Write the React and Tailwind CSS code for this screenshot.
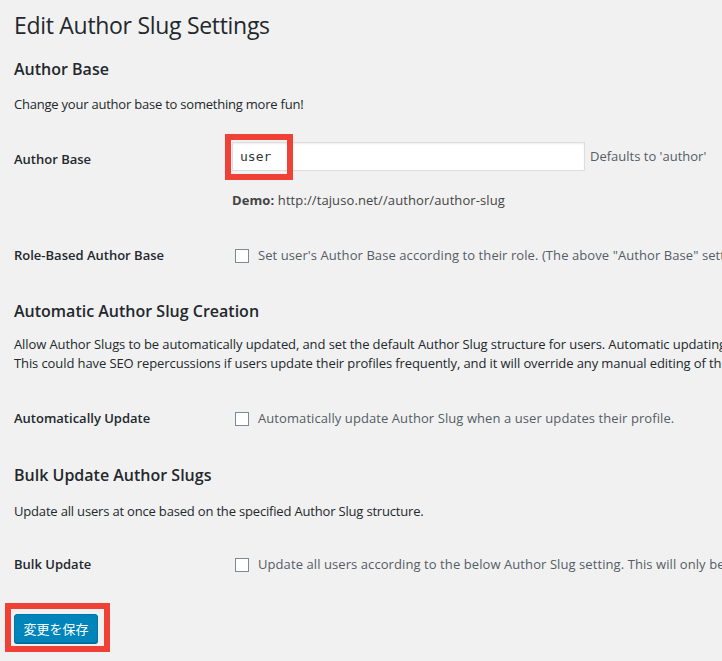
export default function App() {
  const sans = { fontFamily: '"Open Sans", "Noto Sans CJK JP", sans-serif' };

  return (
    <div
      className="w-[722px] h-[661px] overflow-hidden bg-[#f1f1f1] text-[#23282d] whitespace-nowrap"
      style={sans}
    >
      <div className="pl-[14px] pt-[10px]">
        <h1 className="text-[23px] leading-[30px] font-normal tracking-[-0.3px]">Edit Author Slug Settings</h1>

        {/* Author Base */}
        <h2 className="mt-[17px] text-[16px] leading-[24px] font-semibold">Author Base</h2>
        <p className="mt-[13px] text-[13px] leading-[20px] tracking-[-0.22px]">Change your author base to something more fun!</p>

        <div className="mt-[28px] flex">
          <div className="w-[218px] shrink-0 pt-[7px] text-[13px] leading-[20px] font-semibold">Author Base</div>
          <div>
            <div className="flex items-center">
              <div className="relative">
                <input
                  type="text"
                  defaultValue="user"
                  className="w-[353px] h-[29px] bg-white border border-[#dddddd] px-[7px] text-[13px] text-[#32373c] shadow-[inset_0_1px_2px_rgba(0,0,0,0.07)] outline-none"
                  style={{ fontFamily: '"DejaVu Sans Mono", monospace' }}
                />
                <div className="absolute left-[-7px] top-[-8px] w-[68px] h-[46px] border-[6px] border-[#ef4136] pointer-events-none" />
              </div>
              <span className="ml-[5px] text-[13px] text-[#555d66]">Defaults to 'author'</span>
            </div>
            <p className="mt-[19px] text-[13px] leading-[20px] text-[#444] tracking-[0.1px]">
              <span className="font-bold">Demo:</span> http://tajuso.net//author/author-slug
            </p>
          </div>
        </div>

        <div className="mt-[36px] flex items-center h-[20px]">
          <div className="w-[218px] shrink-0 text-[13px] font-semibold">Role-Based Author Base</div>
          <label className="flex items-center text-[13px] text-[#555d66] tracking-[0.08px]">
            <span className="ml-[3px] w-[14px] h-[14px] border border-[#7e8993] bg-white" />
            <span className="ml-[9px]">Set user's Author Base according to their role. (The above "Author Base" setting will be used as a fallback.)</span>
          </label>
        </div>

        {/* Automatic Author Slug Creation */}
        <h2 className="mt-[33px] text-[16px] leading-[24px] font-semibold">Automatic Author Slug Creation</h2>
        <p className="mt-[12px] text-[13px] leading-[19px] tracking-[-0.1px]">
          Allow Author Slugs to be automatically updated, and set the default Author Slug structure for users. Automatic updating will only occur when a user can't edit Author Slugs on their own.
          <br />
          This could have SEO repercussions if users update their profiles frequently, and it will override any manual editing of the Author Slug you may have previously completed.
        </p>

        <div className="mt-[36px] flex items-center h-[20px]">
          <div className="w-[218px] shrink-0 text-[13px] font-semibold">Automatically Update</div>
          <label className="flex items-center text-[13px] text-[#555d66] tracking-[0.08px]">
            <span className="ml-[3px] w-[14px] h-[14px] border border-[#7e8993] bg-white" />
            <span className="ml-[9px]">Automatically update Author Slug when a user updates their profile.</span>
          </label>
        </div>

        {/* Bulk Update */}
        <h2 className="mt-[34px] text-[16px] leading-[24px] font-semibold">Bulk Update Author Slugs</h2>
        <p className="mt-[14px] text-[13px] leading-[20px] tracking-[-0.18px]">Update all users at once based on the specified Author Slug structure.</p>

        <div className="mt-[34px] flex items-center h-[20px]">
          <div className="w-[218px] shrink-0 text-[13px] font-semibold">Bulk Update</div>
          <label className="flex items-center text-[13px] text-[#555d66] tracking-[0.08px]">
            <span className="ml-[3px] w-[14px] h-[14px] border border-[#7e8993] bg-white" />
            <span className="ml-[9px]">Update all users according to the below Author Slug setting. This will only be done once.</span>
          </label>
        </div>

        <div className="mt-[39px] relative w-fit">
          <button className="h-[29px] w-[84px] bg-[#0085ba] border border-[#0073aa] rounded-[3px] shadow-[0_1px_0_#006799] text-white text-[13px] leading-[26px]">
            変更を保存
          </button>
          <div className="absolute left-[-9px] top-[-11px] w-[105px] h-[49px] border-[6px] border-[#ef4136] pointer-events-none" />
        </div>
      </div>
    </div>
  );
}
